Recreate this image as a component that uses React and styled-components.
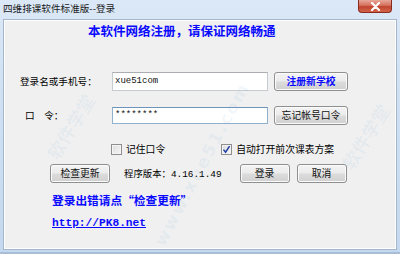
import React from 'react';
import styled, { createGlobalStyle } from 'styled-components';

const GlobalStyle = createGlobalStyle`
  html, body {
    margin: 0;
    padding: 0;
    background: #c9dcf1;
  }
  * {
    box-sizing: border-box;
  }
`;

const CJK = `"Noto Sans CJK SC", "Noto Sans", sans-serif`;
const MONO = `"Liberation Mono", "Noto Sans CJK SC", monospace`;

const Window = styled.div`
  position: relative;
  width: 400px;
  height: 254px;
  display: flex;
  flex-direction: column;
  overflow: hidden;
  background: linear-gradient(180deg, #dbe8f7 0%, #cfe0f3 40%, #c4d9ef 100%);
  border-bottom: 2px solid #a9bed6;
  font-family: ${CJK};
  font-size: 10px;
  color: #000;
`;

const TitleBar = styled.div`
  height: 19px;
  flex: none;
  display: flex;
  align-items: flex-start;
  justify-content: space-between;
  padding-left: 3px;
`;

const Title = styled.div`
  line-height: 17px;
  font-size: 9.6px;
  color: #1a1a1a;
`;

const CloseButton = styled.div`
  width: 34px;
  height: 13px;
  margin-right: 8px;
  display: flex;
  align-items: center;
  justify-content: center;
  border: 1px solid #8a2b20;
  border-top: none;
  border-radius: 0 0 4px 4px;
  background: linear-gradient(180deg, #e8a89a 0%, #d3705c 45%, #c24530 55%, #d0644a 100%);
`;

const Client = styled.div`
  flex: 1;
  margin: 0 3px 2px 3px;
  background: #f0f0f0;
  border: 1px solid #a3b6cb;
  box-shadow: inset 0 0 0 1px #ffffff;
  display: flex;
  flex-direction: column;
`;

const Heading = styled.div`
  margin-top: 3px;
  padding-left: 84px;
  line-height: 16px;
  font-size: 12.5px;
  font-weight: bold;
  color: #0a0aff;
`;

const FormRow = styled.div`
  display: flex;
  align-items: center;
  height: 20px;
  margin-top: ${p => p.$top}px;
  padding-left: ${p => p.$indent || 16}px;
  gap: ${p => p.$gap || 0}px;
`;

const Label = styled.div`
  width: 92px;
  padding-left: ${p => p.$pad || 0}px;
  font-size: 9.6px;
  white-space: nowrap;
`;

const Input = styled.div`
  width: 156px;
  height: ${p => p.$h}px;
  display: flex;
  align-items: center;
  padding-left: 2px;
  background: #fff;
  border: 1px solid ${p => (p.$focus ? '#8fb0cf' : '#c6cbd2')};
  border-top-color: ${p => (p.$focus ? '#6d94bc' : '#abadb3')};
  font-family: ${MONO};
  font-size: 9px;
  color: #111;
`;

const Button = styled.div`
  width: ${p => p.$w}px;
  height: 19px;
  margin-left: ${p => p.$ml || 0}px;
  display: flex;
  align-items: center;
  justify-content: center;
  border: 1px solid #8e8f8f;
  border-radius: 3px;
  background: linear-gradient(180deg, #f4f4f4 0%, #ebebeb 48%, #dcdcdc 52%, #d0d0d0 100%);
  box-shadow: inset 0 0 0 1px #fbfbfb;
  font-size: 9.8px;
  font-weight: ${p => (p.$blue ? 'bold' : 'normal')};
  color: ${p => (p.$blue ? '#0a0aff' : '#111')};
  white-space: nowrap;
`;

const CheckGroup = styled.div`
  display: flex;
  align-items: center;
  gap: 4px;
  font-size: 9.8px;
  white-space: nowrap;
`;

const Box = styled.div`
  width: 11px;
  height: 11px;
  display: flex;
  align-items: center;
  justify-content: center;
  border: 1px solid #8f8f8f;
  background: linear-gradient(135deg, #dcdcdc 0%, #f6f6f6 100%);
  box-shadow: inset 0 0 0 1px #f4f4f4;
`;

const Version = styled.div`
  margin-left: 14px;
  font-size: 9.4px;
  white-space: nowrap;
  span {
    font-family: ${MONO};
  }
`;

const ErrorHint = styled.div`
  margin-top: 10px;
  padding-left: 48px;
  line-height: 14px;
  font-size: 11.7px;
  font-weight: bold;
  color: #0a0aff;
`;

const Link = styled.div`
  margin-top: 10px;
  padding-left: 48px;
  line-height: 12px;
  font-family: ${MONO};
  font-size: 11.2px;
  font-weight: bold;
  color: #0a0aff;
  text-decoration: underline;
`;

const Watermark = styled.div`
  position: absolute;
  left: ${p => p.$x}px;
  top: ${p => p.$y}px;
  transform: rotate(${p => p.$r}deg);
  transform-origin: left top;
  font-family: ${p => (p.$mono ? `"DejaVu Sans", sans-serif` : CJK)};
  font-size: ${p => p.$size}px;
  font-weight: bold;
  letter-spacing: ${p => p.$ls || 0}px;
  color: rgba(120, 170, 220, 0.09);
  pointer-events: none;
  white-space: nowrap;
`;

const Check = () => (
  <svg width="9" height="9" viewBox="0 0 9 9">
    <path d="M1.5 4.6 L3.6 7.2 L7.6 1.2" fill="none" stroke="#1f3fa8" strokeWidth="1.5" />
  </svg>
);

const CloseX = () => (
  <svg width="11" height="9" viewBox="0 0 11 9">
    <path d="M2 1 L9 8 M9 1 L2 8" stroke="#fff" strokeWidth="2.2" strokeLinecap="round" />
  </svg>
);

export default function App() {
  return (
    <Window>
      <GlobalStyle />
      <TitleBar>
        <Title>四维排课软件标准版--登录</Title>
        <CloseButton>
          <CloseX />
        </CloseButton>
      </TitleBar>
      <Client>
        <Heading>本软件网络注册，请保证网络畅通</Heading>

        <FormRow $top={32}>
          <Label>登录名或手机号：</Label>
          <Input $h={19}>xue51com</Input>
          <Button $w={74} $ml={6} $blue>注册新学校</Button>
        </FormRow>

        <FormRow $top={14}>
          <Label $pad={5}>口　令：</Label>
          <Input $h={17} $focus>********</Input>
          <Button $w={74} $ml={6}>忘记帐号口令</Button>
        </FormRow>

        <FormRow $top={14} $indent={107} $gap={56}>
          <CheckGroup>
            <Box />
            记住口令
          </CheckGroup>
          <CheckGroup>
            <Box>
              <Check />
            </Box>
            自动打开前次课表方案
          </CheckGroup>
        </FormRow>

        <FormRow $top={4} $indent={46}>
          <Button $w={60}>检查更新</Button>
          <Version>
            程序版本：<span>4.16.1.49</span>
          </Version>
          <Button $w={50} $ml={18}>登录</Button>
          <Button $w={50} $ml={7}>取消</Button>
        </FormRow>

        <ErrorHint>登录出错请点“检查更新”</ErrorHint>
        <Link>http://PK8.net</Link>
      </Client>

      <Watermark $x={40} $y={150} $r={-58} $size={18}>软件学堂</Watermark>
      <Watermark $x={150} $y={240} $r={-62} $size={17} $mono $ls={2}>www.xue51.com</Watermark>
      <Watermark $x={335} $y={160} $r={-58} $size={18}>软件学堂</Watermark>
    </Window>
  );
}
